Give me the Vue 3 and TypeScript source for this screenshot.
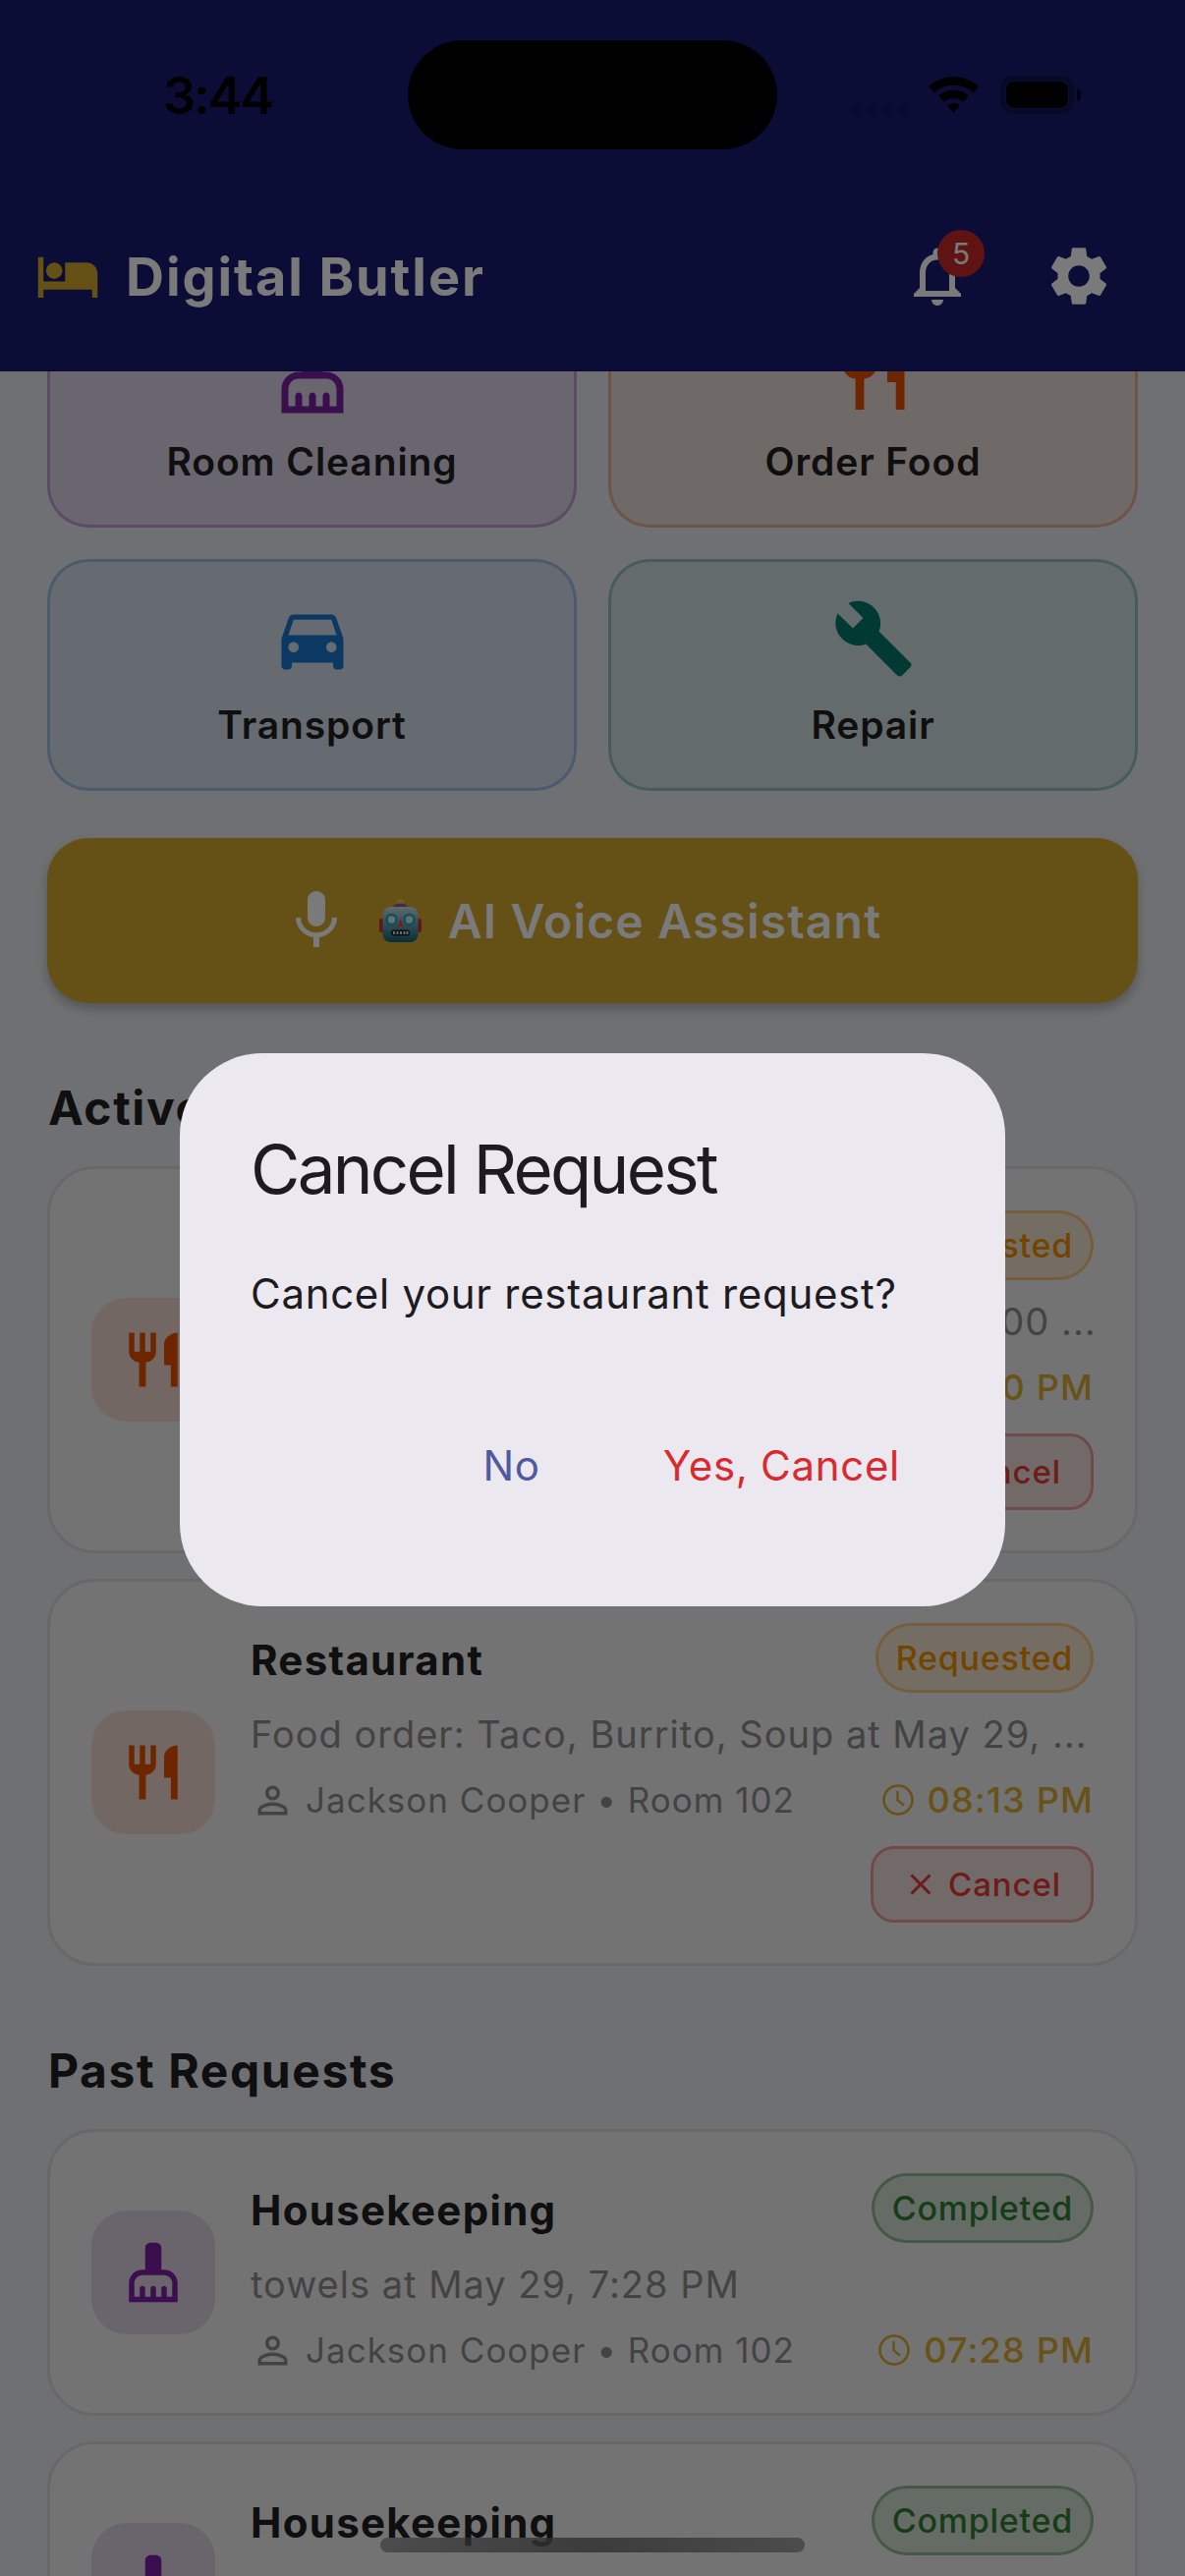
<template>
  <div class="screen">
    <header class="app-header">
      <div class="status-bar">
        <span class="clock">3:44</span>
        <div class="island"></div>
        <div class="status-icons">
          <div class="signal"><i v-for="n in 4" :key="n"></i></div>
          <svg class="wifi" viewBox="0 0 51 37"><path d="M25.5 0C15.8 0 7 3.7 0 10l5.5 6.4c5.3-4.8 12.3-7.7 20-7.7s14.7 2.9 20 7.7L51 10C44 3.7 35.2 0 25.5 0zM25.5 13.6c-5.9 0-11.3 2.2-15.4 5.8l5.6 6.4c2.6-2.3 6-3.7 9.8-3.7s7.2 1.4 9.8 3.7l5.6-6.4c-4.1-3.6-9.5-5.8-15.4-5.8zM25.5 27c-2.6 0-5 1-6.8 2.5l6.8 7.5 6.8-7.5C30.5 28 28.1 27 25.5 27z" /></svg>
          <div class="battery"><div class="battery-fill"></div></div>
          <div class="battery-tip"></div>
        </div>
      </div>
      <div class="toolbar">
        <svg class="bed" viewBox="0 0 24 24"><path :d="icons.hotel" /></svg>
        <h1 class="app-title">Digital Butler</h1>
        <div class="toolbar-btn">
          <svg class="tb-icon" viewBox="0 0 24 24"><path :d="icons.bell" /></svg>
          <span class="notif-count">5</span>
        </div>
        <div class="toolbar-btn">
          <svg class="tb-icon" viewBox="0 0 24 24"><path :d="icons.gear" /></svg>
        </div>
      </div>
    </header>

    <main class="content">
      <div class="scroller">
        <div class="service-grid">
          <div v-for="s in services" :key="s.label" class="service" :style="tint(s.rgb)">
            <svg class="service-icon" viewBox="0 0 24 24" :style="{ fill: `rgb(${s.rgb})` }"><path :d="s.icon" /></svg>
            <span class="service-label">{{ s.label }}</span>
          </div>
        </div>

        <div class="voice-btn">
          <svg class="mic" viewBox="0 0 24 24"><path :d="icons.mic" /></svg>
          <svg class="robot" viewBox="0 0 43 44">
            <defs>
              <linearGradient id="face" x1="0" y1="0" x2="0" y2="1">
                <stop offset="0" stop-color="#c9dde0" />
                <stop offset="0.55" stop-color="#5f9aa8" />
                <stop offset="1" stop-color="#0f5f78" />
              </linearGradient>
            </defs>
            <rect x="0" y="20" width="6" height="14" rx="2" fill="#c8343c" />
            <rect x="37" y="20" width="6" height="14" rx="2" fill="#c8343c" />
            <ellipse cx="21.5" cy="3.5" rx="3.5" ry="3.5" fill="#f0c040" />
            <ellipse cx="21.5" cy="7.5" rx="7" ry="3" fill="#8a55b0" />
            <rect x="3.5" y="8" width="36" height="36" rx="8" fill="url(#face)" />
            <circle cx="12.5" cy="21" r="5" fill="#d8e6ea" stroke="#1aa6c8" stroke-width="2.5" />
            <circle cx="30.5" cy="21" r="5" fill="#d8e6ea" stroke="#1aa6c8" stroke-width="2.5" />
            <path d="M21.5 20l3.5 8h-7z" fill="#e0484e" />
            <rect x="12" y="31.5" width="19" height="6" rx="3" fill="#222" />
            <path d="M15 33v3M18.5 33v3M22 33v3M25.5 33v3M28.5 33v3" stroke="#ddd" stroke-width="2" />
          </svg>
          <span class="voice-label">AI Voice Assistant</span>
        </div>

        <section v-for="group in groups" :key="group.title" class="group">
          <h2 class="group-title">{{ group.title }}</h2>
          <div class="cards">
            <article v-for="(r, i) in group.items" :key="i" class="card">
              <div class="card-icon" :style="{ background: `rgba(${r.rgb},.15)` }">
                <svg viewBox="0 0 24 24" :style="{ fill: `rgb(${r.rgb})` }"><path :d="r.icon" /></svg>
              </div>
              <div class="card-body">
                <div class="card-head">
                  <span class="card-title">{{ r.title }}</span>
                  <span class="badge" :class="r.status.toLowerCase()">{{ r.status }}</span>
                </div>
                <p class="card-desc">{{ r.desc }}</p>
                <div class="card-meta">
                  <svg class="person" viewBox="0 0 24 24"><path :d="icons.person" /></svg>
                  <span class="guest">Jackson Cooper • Room 102</span>
                  <svg class="time-icon" viewBox="0 0 32 32">
                    <circle cx="16" cy="16" r="14.5" />
                    <path d="M15.5 7v9.5l6.5 5" />
                  </svg>
                  <span class="time">{{ r.time }}</span>
                </div>
                <div v-if="r.cancellable" class="card-actions">
                  <div class="cancel-btn">
                    <svg viewBox="0 0 24 24"><path :d="icons.close" /></svg>
                    <span>Cancel</span>
                  </div>
                </div>
              </div>
            </article>
          </div>
        </section>
      </div>
    </main>

    <div class="scrim">
      <div class="dialog">
        <h3 class="dialog-title">Cancel Request</h3>
        <p class="dialog-text">Cancel your restaurant request?</p>
        <div class="dialog-actions">
          <span class="dialog-btn no">No</span>
          <span class="dialog-btn yes">Yes, Cancel</span>
        </div>
      </div>
    </div>
    <div class="home-indicator"></div>
  </div>
</template>

<script setup lang="ts">
const icons = {
  hotel: 'M7 13c1.66 0 3-1.34 3-3S8.66 7 7 7s-3 1.34-3 3 1.34 3 3 3zm12-6h-8v7H3V5H1v15h2v-3h18v3h2v-9c0-2.21-1.79-4-4-4z',
  bell: 'M12 22c1.1 0 2-.9 2-2h-4c0 1.1.89 2 2 2zm6-6v-5c0-3.07-1.64-5.64-4.5-6.32V4c0-.83-.67-1.5-1.5-1.5s-1.5.67-1.5 1.5v.68C7.63 5.36 6 7.92 6 11v5l-2 2v1h16v-1l-2-2zm-2 1H8v-6c0-2.48 1.51-4.5 4-4.5s4 2.02 4 4.5v6z',
  gear: 'M19.14 12.94c.04-.3.06-.61.06-.94 0-.32-.02-.64-.07-.94l2.03-1.58c.18-.14.23-.41.12-.61l-1.92-3.32c-.12-.22-.37-.29-.59-.22l-2.39.96c-.5-.38-1.03-.7-1.62-.94l-.36-2.54c-.04-.24-.24-.41-.48-.41h-3.84c-.24 0-.43.17-.47.41l-.36 2.54c-.59.24-1.13.57-1.62.94l-2.39-.96c-.22-.08-.47 0-.59.22L2.74 8.87c-.12.21-.08.47.12.61l2.03 1.58c-.05.3-.09.63-.09.94s.02.64.07.94l-2.03 1.58c-.18.14-.23.41-.12.61l1.92 3.32c.12.22.37.29.59.22l2.39-.96c.5.38 1.03.7 1.62.94l.36 2.54c.05.24.24.41.48.41h3.84c.24 0 .44-.17.47-.41l.36-2.54c.59-.24 1.13-.56 1.62-.94l2.39.96c.22.08.47 0 .59-.22l1.92-3.32c.12-.22.07-.47-.12-.61l-2.01-1.58zM12 15.6c-1.98 0-3.6-1.62-3.6-3.6s1.62-3.6 3.6-3.6 3.6 1.62 3.6 3.6-1.62 3.6-3.6 3.6z',
  broom: 'M16 11h-1V3c0-1.1-.9-2-2-2h-2c-1.1 0-2 .9-2 2v8H8c-2.76 0-5 2.24-5 5v7h18v-7c0-2.76-2.24-5-5-5zm3 10h-2v-3c0-.55-.45-1-1-1s-1 .45-1 1v3h-2v-3c0-.55-.45-1-1-1s-1 .45-1 1v3H9v-3c0-.55-.45-1-1-1s-1 .45-1 1v3H5v-5c0-1.65 1.35-3 3-3h8c1.65 0 3 1.35 3 3v5z',
  food: 'M11 9H9V2H7v7H5V2H3v7c0 2.12 1.66 3.84 3.75 3.97V22h2.5v-9.03C11.34 12.84 13 11.12 13 9V2h-2v7zm5-3v8h2.5v8H21V2c-2.76 0-5 2.24-5 4z',
  car: 'M18.92 6.01C18.72 5.42 18.16 5 17.5 5h-11c-.66 0-1.21.42-1.42 1.01L3 12v8c0 .55.45 1 1 1h1c.55 0 1-.45 1-1v-1h12v1c0 .55.45 1 1 1h1c.55 0 1-.45 1-1v-8l-2.08-5.99zM6.5 16c-.83 0-1.5-.67-1.5-1.5S5.67 13 6.5 13s1.5.67 1.5 1.5S7.33 16 6.5 16zm11 0c-.83 0-1.5-.67-1.5-1.5s.67-1.5 1.5-1.5 1.5.67 1.5 1.5-.67 1.5-1.5 1.5zM5 11l1.5-4.5h11L19 11H5z',
  wrench: 'M22.7 19l-9.1-9.1c.9-2.3.4-5-1.5-6.9-2-2-5-2.4-7.4-1.3L9 6 6 9 1.6 4.7C.4 7.1.9 10.1 2.9 12.1c1.9 1.9 4.6 2.4 6.9 1.5l9.1 9.1c.4.4 1 .4 1.4 0l2.3-2.3c.5-.4.5-1.1.1-1.4z',
  mic: 'M12 14c1.66 0 2.99-1.34 2.99-3L15 5c0-1.66-1.34-3-3-3S9 3.34 9 5v6c0 1.66 1.34 3 3 3zm5.3-3c0 3-2.54 5.1-5.3 5.1S6.7 14 6.7 11H5c0 3.41 2.72 6.23 6 6.72V21h2v-3.28c3.28-.48 6-3.3 6-6.72h-1.7z',
  person: 'M12 5.9c1.16 0 2.1.94 2.1 2.1s-.94 2.1-2.1 2.1S9.9 9.16 9.9 8s.94-2.1 2.1-2.1m0 9c2.97 0 6.1 1.46 6.1 2.1v1.1H5.9V17c0-.64 3.13-2.1 6.1-2.1M12 4C9.79 4 8 5.79 8 8s1.79 4 4 4 4-1.79 4-4-1.79-4-4-4zm0 9c-2.67 0-8 1.34-8 4v3h16v-3c0-2.66-5.33-4-8-4z',
  close: 'M19 6.41 17.59 5 12 10.59 6.41 5 5 6.41 10.59 12 5 17.59 6.41 19 12 13.41 17.59 19 19 17.59 13.41 12z',
}

const PURPLE = '123,31,162'
const ORANGE = '230,81,0'

const services = [
  { label: 'Room Cleaning', icon: icons.broom, rgb: PURPLE },
  { label: 'Order Food', icon: icons.food, rgb: ORANGE },
  { label: 'Transport', icon: icons.car, rgb: '25,118,210' },
  { label: 'Repair', icon: icons.wrench, rgb: '0,121,107' },
]

const past = {
  title: 'Housekeeping',
  status: 'Completed',
  desc: 'towels at May 29, 7:28 PM',
  time: '07:28 PM',
  icon: icons.broom,
  rgb: PURPLE,
  cancellable: false,
}

const groups = [
  {
    title: 'Active Requests',
    items: [
      { title: 'Restaurant', status: 'Requested', desc: 'Food order: Pastas, Salads at May 29, 8:00 ...', time: '08:20 PM', icon: icons.food, rgb: ORANGE, cancellable: true },
      { title: 'Restaurant', status: 'Requested', desc: 'Food order: Taco, Burrito, Soup at May 29, ...', time: '08:13 PM', icon: icons.food, rgb: ORANGE, cancellable: true },
    ],
  },
  { title: 'Past Requests', items: [past, past] },
]

// border + soft fill for the service tiles
const tint = (rgb: string) => ({
  background: `rgba(${rgb},.1)`,
  borderColor: `rgba(${rgb},.3)`,
})
</script>

<style scoped>
.screen {
  position: relative;
  width: 1206px;
  height: 2622px;
  overflow: hidden;
  display: flex;
  flex-direction: column;
  background: #e9ebf0;
  font-family: Inter, "Liberation Sans", sans-serif;
}

.app-header {
  flex: none;
  height: 378px;
  background: #191d72;
  display: flex;
  flex-direction: column;
  position: relative;
  z-index: 1;
}

.status-bar {
  height: 111px;
  margin-top: 41px;
  padding-left: 166px;
  display: flex;
  align-items: center;
}

.clock {
  width: 249px;
  padding-top: 2px;
  font-size: 52px;
  font-weight: 600;
  color: #000;
  letter-spacing: -2px;
}

.island {
  width: 376px;
  height: 111px;
  border-radius: 56px;
  background: #000;
}

.status-icons {
  margin-left: 74px;
  display: flex;
  align-items: center;
}

.signal {
  display: flex;
  gap: 6px;
  margin-top: 30px;
  margin-right: 22px;
}

.signal i {
  width: 10px;
  height: 10px;
  border-radius: 50%;
  background: #11155e;
}

.wifi {
  width: 51px;
  height: 37px;
  fill: #000;
  margin-right: 22px;
}

.battery {
  width: 75px;
  height: 39px;
  box-sizing: border-box;
  border: 5px solid #0d1355;
  border-radius: 13px;
  padding: 1px;
  display: flex;
}

.battery-fill {
  flex: 1;
  border-radius: 8px;
  background: #000;
}

.battery-tip {
  width: 4px;
  height: 12px;
  margin-left: 3px;
  border-radius: 0 4px 4px 0;
  background: #05061c;
}

.toolbar {
  flex: 1;
  margin-top: 32px;
  padding: 0 36px;
  display: flex;
  align-items: center;
}

.bed {
  width: 66px;
  height: 66px;
  fill: #d4a72c;
}

.app-title {
  flex: 1;
  margin: 0 0 0 26px;
  font-size: 54px;
  font-weight: 700;
  letter-spacing: 1.9px;
  color: #fff;
}

.toolbar-btn {
  position: relative;
  width: 144px;
  height: 144px;
  display: flex;
  align-items: center;
  justify-content: center;
}

.tb-icon {
  width: 72px;
  height: 72px;
  fill: #fff;
}

.notif-count {
  position: absolute;
  left: 72px;
  top: 25px;
  width: 48px;
  height: 48px;
  border-radius: 50%;
  background: #c62828;
  color: #fff;
  font-size: 30px;
  line-height: 48px;
  text-align: center;
}

.content {
  flex: 1;
  min-height: 0;
  overflow: hidden;
}

.scroller {
  margin-top: -77px;
  padding: 0 48px;
}

.service-grid {
  display: grid;
  grid-template-columns: 1fr 1fr;
  gap: 32px;
}

.service {
  box-sizing: border-box;
  height: 236px;
  border: 3px solid;
  border-radius: 42px;
  padding-top: 36px;
  display: flex;
  flex-direction: column;
  align-items: center;
}

.service-icon {
  width: 84px;
  height: 84px;
}

.service-label {
  margin-top: 21px;
  font-size: 39px;
  line-height: 50px;
  font-weight: 600;
  letter-spacing: .9px;
  color: #212121;
}

.voice-btn {
  height: 168px;
  margin-top: 48px;
  padding-right: 23px;
  border-radius: 42px;
  background: #d4a72c;
  box-shadow: 0 6px 12px rgba(0, 0, 0, .25);
  display: flex;
  align-items: center;
  justify-content: center;
}

.mic {
  width: 72px;
  height: 72px;
  fill: #fff;
}

.robot {
  width: 43px;
  height: 44px;
  margin: 0 27px 0 28px;
}

.voice-label {
  font-size: 48px;
  font-weight: 600;
  letter-spacing: 1.2px;
  color: #fff;
}

.group {
  margin-top: 77px;
}

.group-title {
  margin: 0 0 29px;
  padding-left: 1px;
  font-size: 48px;
  line-height: 60px;
  font-weight: 700;
  letter-spacing: 1.6px;
  color: #212121;
}

.cards {
  display: flex;
  flex-direction: column;
  gap: 26px;
}

.card {
  box-sizing: border-box;
  border: 3px solid #dadada;
  border-radius: 48px;
  padding: 42px;
  background: #f0f0f0;
  display: flex;
  align-items: center;
  gap: 36px;
}

.card-icon {
  flex: none;
  width: 126px;
  height: 126px;
  border-radius: 36px;
  display: flex;
  align-items: center;
  justify-content: center;
}

.card-icon svg {
  width: 66px;
  height: 66px;
}

.card-body {
  flex: 1;
  min-width: 0;
}

.card-head {
  display: flex;
  align-items: center;
  justify-content: space-between;
}

.card-title {
  padding-top: 3px;
  font-size: 42px;
  font-weight: 700;
  letter-spacing: 1.3px;
  color: #212121;
}

.badge {
  box-sizing: border-box;
  height: 71px;
  padding: 0 18px;
  border: 3px solid;
  border-radius: 36px;
  font-size: 34px;
  font-weight: 500;
  line-height: 65px;
  letter-spacing: .75px;
}

.badge.requested {
  color: #f08c00;
  background: rgba(245, 150, 0, .12);
  border-color: rgba(245, 150, 0, .4);
}

.badge.completed {
  color: #2e7d32;
  background: rgba(46, 125, 50, .15);
  border-color: rgba(46, 125, 50, .4);
}

.card-desc {
  margin: 16px 0 0;
  font-size: 38px;
  line-height: 52px;
  letter-spacing: 1px;
  white-space: nowrap;
  color: #8c8c8c;
}

.card-meta {
  height: 44px;
  margin-top: 19px;
  display: flex;
  align-items: center;
}

.person {
  width: 45px;
  height: 45px;
  fill: #8c8c8c;
}

.guest {
  flex: 1;
  margin-left: 11px;
  font-size: 35px;
  letter-spacing: 1px;
  color: #8c8c8c;
}

.time-icon {
  width: 32px;
  height: 32px;
  fill: none;
  stroke: #d9ac30;
  stroke-width: 2.5;
}

.time {
  margin-left: 14px;
  font-size: 36px;
  font-weight: 500;
  letter-spacing: 1.2px;
  color: #d9ac30;
}

.card-actions {
  margin: 25px 0 -1px;
  display: flex;
  justify-content: flex-end;
}

.cancel-btn {
  box-sizing: border-box;
  height: 78px;
  padding: 0 30px;
  border: 3px solid rgba(229, 57, 53, .4);
  border-radius: 24px;
  background: rgba(229, 57, 53, .1);
  display: flex;
  align-items: center;
  gap: 10px;
  font-size: 33px;
  font-weight: 500;
  letter-spacing: .9px;
  color: #e53935;
}

.cancel-btn svg {
  width: 36px;
  height: 36px;
  fill: #e53935;
}

.scrim {
  position: absolute;
  inset: 0;
  z-index: 2;
  box-sizing: border-box;
  padding-top: 84px;
  background: rgba(0, 0, 0, .52);
  display: flex;
  align-items: center;
  justify-content: center;
}

.dialog {
  box-sizing: border-box;
  width: 840px;
  padding: 75px 72px 83px;
  border-radius: 84px;
  background: #ebe8ef;
}

.dialog-title {
  margin: 0;
  font-size: 69px;
  line-height: 86px;
  font-weight: 400;
  letter-spacing: -2.7px;
  color: #1d1b20;
}

.dialog-text {
  margin: 54px 0 0;
  font-size: 42px;
  line-height: 60px;
  letter-spacing: .7px;
  color: #1d1b20;
}

.dialog-actions {
  margin-top: 85px;
  margin-right: 35px;
  height: 120px;
  display: flex;
  align-items: center;
  justify-content: flex-end;
  gap: 125px;
}

.dialog-btn {
  font-size: 42px;
  letter-spacing: .7px;
}

.dialog-btn.no {
  color: #4f5a9e;
}

.dialog-btn.yes {
  color: #d92b2f;
}

.home-indicator {
  position: absolute;
  z-index: 3;
  left: 387px;
  bottom: 24px;
  width: 432px;
  height: 15px;
  border-radius: 8px;
  background: linear-gradient(90deg, rgba(50, 50, 50, .6), rgba(50, 50, 50, .85) 50%, rgba(50, 50, 50, .6));
}
</style>
